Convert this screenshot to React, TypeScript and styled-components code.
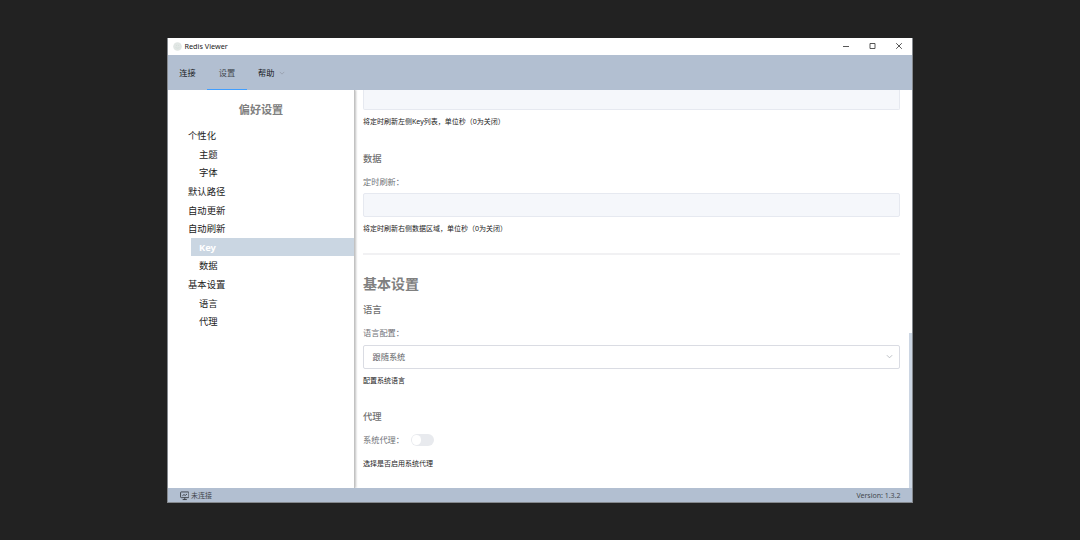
import React from "react";
import styled, { createGlobalStyle } from "styled-components";

const GlobalStyle = createGlobalStyle`
  * { box-sizing: border-box; }
  body {
    margin: 0;
    background: #222222;
    font-family: "Noto Sans", "Noto Sans CJK SC", sans-serif;
    color: #303133;
  }
`;

const Desktop = styled.main`
  height: 540px;
  padding: 38px 167px 37px;
  overflow: hidden;
`;

const Window = styled.div`
  display: flex;
  flex-direction: column;
  width: 746px;
  height: 465px;
  background: #fff;
  border: 1px solid #85898e;
  border-top: 0;
`;

const TitleBar = styled.header`
  display: flex;
  align-items: center;
  flex: none;
  height: 17px;
  padding: 0 9px 0 4.5px;
  font-size: 7.25px;
  line-height: 14px;
  color: #222;
`;

const AppName = styled.span`
  height: 15px;
`;

const AppIcon = styled.svg`
  width: 9px;
  height: 9px;
  margin-right: 3px;
`;

const Controls = styled.div`
  display: flex;
  gap: 18.5px;
  margin-left: auto;
  padding-bottom: 1px;
  svg { width: 8px; height: 8px; }
`;

const MenuBar = styled.nav`
  display: flex;
  flex: none;
  height: 35px;
  background: #b2bfd1;
`;

const MenuItem = styled.div<{ $active?: boolean }>`
  display: flex;
  align-items: center;
  width: 39.4px;
  padding: 2px 0 0 11.3px;
  font-size: 8.2px;
  line-height: 12px;
  white-space: nowrap;
  color: ${(p) => (p.$active ? "#43484f" : "#16181b")};
  border-bottom: 1px solid ${(p) => (p.$active ? "#409eff" : "transparent")};
  svg { flex: none; width: 6px; height: 6px; margin: 0 0 1px 5px; }
`;

const Body = styled.div`
  display: flex;
  flex: 1;
  min-height: 0;
`;

const Sidebar = styled.aside`
  flex: none;
  width: 187px;
  border-right: 1px solid #c2c2c2;
  box-shadow: 1px 0 2px rgba(0, 0, 0, 0.25);
  clip-path: inset(0 -5px 0 0);
`;

const SidebarTitle = styled.h2`
  margin: 0 0 7px;
  padding: 10px 0 0;
  font-size: 11.1px;
  line-height: 19px;
  text-align: center;
  color: #808080;
`;

const TreeItem = styled.div<{ $nested?: boolean; $active?: boolean }>`
  height: 18.65px;
  margin-left: ${(p) => (p.$nested ? 23 : 12)}px;
  padding: 1px 0 0 8px;
  font-size: 9.33px;
  line-height: 18.65px;
  color: ${(p) => (p.$active ? "#fff" : "#222")};
  font-weight: ${(p) => (p.$active ? 700 : 400)};
  background: ${(p) => (p.$active ? "#cad6e2" : "transparent")};
`;

const Content = styled.section`
  flex: 1;
  min-width: 0;
  padding: 0 8.5px 0 8px;
`;

const Input = styled.div<{ $cut?: boolean }>`
  height: ${(p) => (p.$cut ? 20 : 24)}px;
  background: #f5f7fb;
  border: 1px solid #e6e9f0;
  border-top-width: ${(p) => (p.$cut ? 0 : 1)}px;
  border-radius: ${(p) => (p.$cut ? "0 0 2px 2px" : "2px")};
`;

const Select = styled.div`
  display: flex;
  align-items: center;
  justify-content: space-between;
  height: 24px;
  padding: 0 6px 1px 8.5px;
  border: 1px solid #dadce3;
  border-radius: 2px;
  font-size: 8.2px;
  color: #606266;
  svg { width: 7px; height: 7px; }
`;

const Help = styled.p`
  margin: 0;
  height: 24px;
  font-size: 7px;
  line-height: 24px;
  color: #222;
`;

const Heading = styled.h1`
  margin: 19.5px 0 0;
  font-size: 14px;
  line-height: 20px;
  color: #808080;
`;

const Subheading = styled.h3<{ $top: number }>`
  margin: ${(p) => p.$top}px 0 0;
  font-size: 9.33px;
  font-weight: 500;
  line-height: 14px;
  color: #707070;
`;

const Label = styled.div`
  display: flex;
  align-items: center;
  height: 12px;
  margin: 10px 0 5.5px;
  font-size: 8.2px;
  line-height: 12px;
  color: #707277;
`;

const ProxyLabel = styled(Label)`
  margin-top: 10.7px;
`;

const Rule = styled.hr`
  height: 2px;
  margin: 11.5px 0 0;
  border: 0;
  background: #f1f1f3;
`;

const Switch = styled.span`
  width: 23.5px;
  height: 11.5px;
  margin-left: 7px;
  padding: 1px;
  border-radius: 6px;
  background: #e8eaee;
  &::before {
    content: "";
    display: block;
    width: 9.5px;
    height: 9.5px;
    border-radius: 50%;
    background: #fff;
  }
`;

const ScrollTrack = styled.div`
  display: flex;
  align-items: flex-end;
  width: 3.5px;
`;

const ScrollThumb = styled.div`
  width: 100%;
  height: 155px;
  background: #ccd6e3;
`;

const StatusBar = styled.footer`
  display: flex;
  align-items: center;
  flex: none;
  height: 14px;
  padding: 2px 11.5px 0 11.5px;
  background: #b2bfd1;
  font-size: 7px;
  line-height: 12px;
  color: #43474d;
  svg { width: 9.5px; height: 9.5px; margin-right: 2px; }
`;

const Version = styled.span`
  margin-left: auto;
`;

const Chevron = ({ color }: { color: string }) => (
  <svg viewBox="0 0 8 8" fill="none" stroke={color} strokeWidth="1">
    <path d="M1 2.5 4 5.5 7 2.5" />
  </svg>
);

const tree = [
  { text: "个性化" },
  { text: "主题", nested: true },
  { text: "字体", nested: true },
  { text: "默认路径" },
  { text: "自动更新" },
  { text: "自动刷新" },
  { text: "Key", nested: true, active: true },
  { text: "数据", nested: true },
  { text: "基本设置" },
  { text: "语言", nested: true },
  { text: "代理", nested: true },
];

export default function App() {
  return (
    <Desktop>
      <GlobalStyle />
      <Window>
        <TitleBar>
          <AppIcon viewBox="0 0 9 9">
            <circle cx="4.5" cy="4.5" r="4.3" fill="#e1e6e4" />
            <path d="M2.5 5.5Q4.5 7 6.5 5.5M3 3.5H4M5 3.5H6" fill="none" stroke="#d0dcd6" strokeWidth="0.6" />
          </AppIcon>
          <AppName>Redis Viewer</AppName>
          <Controls>
            <svg viewBox="0 0 8 8"><path d="M1 4.5H7" stroke="#444" strokeWidth="0.9" /></svg>
            <svg viewBox="0 0 8 8"><path d="M1 1.5H6V6.5H1Z" fill="none" stroke="#444" strokeWidth="0.9" /></svg>
            <svg viewBox="0 0 8 8"><path d="M1.2 1.2 6.8 6.8M6.8 1.2 1.2 6.8" stroke="#444" strokeWidth="0.9" /></svg>
          </Controls>
        </TitleBar>
        <MenuBar>
          <MenuItem>连接</MenuItem>
          <MenuItem $active>设置</MenuItem>
          <MenuItem>帮助<Chevron color="#949ba8" /></MenuItem>
        </MenuBar>
        <Body>
          <Sidebar>
            <SidebarTitle>偏好设置</SidebarTitle>
            {tree.map((item) => (
              <TreeItem key={item.text} $nested={item.nested} $active={item.active}>
                {item.text}
              </TreeItem>
            ))}
          </Sidebar>
          <Content>
            <Input $cut />
            <Help>将定时刷新左侧Key列表，单位秒（0为关闭）</Help>
            <Subheading $top={17.5}>数据</Subheading>
            <Label>定时刷新：</Label>
            <Input />
            <Help>将定时刷新右侧数据区域，单位秒（0为关闭）</Help>
            <Rule />
            <Heading>基本设置</Heading>
            <Subheading $top={9}>语言</Subheading>
            <Label>语言配置：</Label>
            <Select>
              跟随系统
              <Chevron color="#b4b7bd" />
            </Select>
            <Help>配置系统语言</Help>
            <Subheading $top={17}>代理</Subheading>
            <ProxyLabel>系统代理：<Switch /></ProxyLabel>
            <Help>选择是否启用系统代理</Help>
          </Content>
          <ScrollTrack>
            <ScrollThumb />
          </ScrollTrack>
        </Body>
        <StatusBar>
          <svg viewBox="0 0 10 10" fill="none" stroke="#30353b" strokeWidth="0.9">
            <rect x="0.6" y="1" width="8.8" height="6" rx="0.8" />
            <path d="M5 7V9M2.8 9H7.2M2.5 5 4.2 3.8 5.5 4.7 7.4 3.2" />
          </svg>
          未连接
          <Version>Version: 1.3.2</Version>
        </StatusBar>
      </Window>
    </Desktop>
  );
}
